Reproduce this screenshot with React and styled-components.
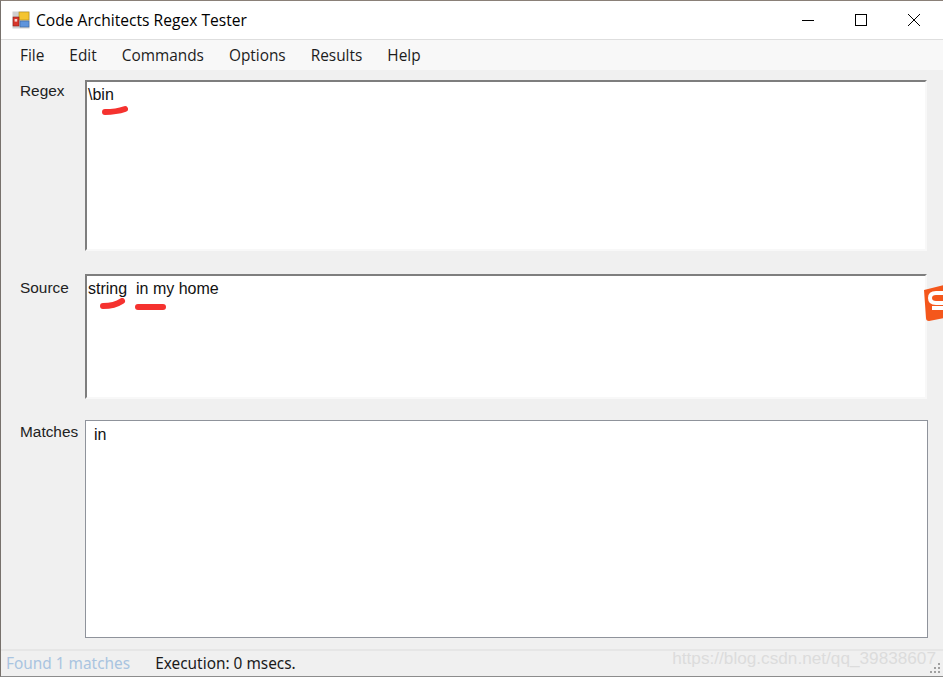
import React from "react";
import styled, { createGlobalStyle } from "styled-components";

const GlobalStyle = createGlobalStyle`
  html, body {
    margin: 0;
    padding: 0;
    background: #f0f0f0;
  }
  * {
    box-sizing: border-box;
  }
`;

const Window = styled.div`
  position: relative;
  width: 943px;
  height: 677px;
  overflow: hidden;
  display: flex;
  flex-direction: column;
  background: #f0f0f0;
  border-top: 1px solid #8a8078;
  border-left: 1px solid #77716c;
  border-bottom: 1px solid #8c8c8c;
  color: #111;
`;

const TitleBar = styled.div`
  height: 39px;
  flex: none;
  display: flex;
  align-items: center;
  background: #fff;
  border-bottom: 1px solid #dedede;
  padding-left: 11px;
`;

const TitleText = styled.span`
  margin-left: 6px;
  font: 15.6px "Open Sans", sans-serif;
  color: #000;
  white-space: nowrap;
`;

const WindowButtons = styled.div`
  margin-left: auto;
  display: flex;
  align-items: center;
  gap: 41px;
  padding-right: 23px;
`;

const MenuBar = styled.div`
  height: 30px;
  flex: none;
  display: flex;
  align-items: center;
  gap: 25px;
  padding-left: 19px;
  background: #f8f8f8;
`;

const MenuItem = styled.span`
  font: 15.4px "Open Sans", sans-serif;
  color: #1d1d1d;
`;

const Form = styled.div`
  flex: 1;
  display: flex;
  flex-direction: column;
  padding: 10px 16px 0 19px;
`;

const Row = styled.div`
  height: ${(p) => p.$height}px;
  margin-bottom: ${(p) => p.$gap}px;
  display: flex;
`;

const Label = styled.label`
  width: 65px;
  flex: none;
  padding-top: ${(p) => p.$top}px;
  font: 15.4px "Liberation Sans", sans-serif;
  color: #222;
`;

const TextBox = styled.div`
  position: relative;
  flex: 1;
  background: #fff;
  padding: 3px 1px;
  font: 16px/20px "Liberation Sans", sans-serif;
  color: #111;
  white-space: pre;
  border-top: 2px solid #7e7e7e;
  border-left: 2px solid #7e7e7e;
  border-right: 2px solid #f8f8f8;
  border-bottom: 2px solid #f8f8f8;
`;

const ResultBox = styled.div`
  flex: 1;
  margin-right: -1px;
  background: #fff;
  border: 1px solid #8f939b;
  padding: 4px 8px;
  font: 16px/20px "Liberation Sans", sans-serif;
  color: #111;
`;

const Mark = styled.svg`
  position: absolute;
  left: ${(p) => p.$left}px;
  top: ${(p) => p.$top}px;
`;

const StatusBar = styled.div`
  height: 27px;
  flex: none;
  display: flex;
  align-items: center;
  gap: 25px;
  padding-left: 5px;
  border-top: 2px solid #e6e6e6;
  font: 15.4px "Noto Sans", sans-serif;
`;

const StatusText = styled.span`
  color: ${(p) => p.$color};
  white-space: nowrap;
`;

const Watermark = styled.span`
  position: absolute;
  right: 7px;
  bottom: 7px;
  font: 17.2px "Liberation Sans", sans-serif;
  color: #dcdcdc;
  white-space: nowrap;
`;

const Grip = styled.svg`
  position: absolute;
  right: 2px;
  bottom: 2px;
`;

const SideBadge = styled.svg`
  position: absolute;
  right: -1px;
  top: 283px;
`;

function AppIcon() {
  return (
    <svg width="18" height="18" viewBox="0 0 18 18">
      <rect x="0.5" y="0.5" width="17" height="17" fill="#cfd0d0" />
      <rect x="7" y="1" width="10" height="8" fill="#f4c430" stroke="#b08a1a" strokeWidth="0.6" />
      <rect x="1" y="6" width="6" height="9" fill="#d8352a" stroke="#8a2018" strokeWidth="0.6" />
      <rect x="2.6" y="8" width="2.6" height="2.6" fill="#f6d5d0" />
      <rect x="8" y="10" width="9" height="6" fill="#5e94dc" stroke="#37629c" strokeWidth="0.6" />
    </svg>
  );
}

function RedMark({ left, top, width, height, d }) {
  return (
    <Mark $left={left} $top={top} width={width} height={height} viewBox={`0 0 ${width} ${height}`}>
      <path d={d} fill="none" stroke="#f5322f" strokeWidth="6" strokeLinecap="round" />
    </Mark>
  );
}

export default function App() {
  return (
    <Window>
      <GlobalStyle />
      <TitleBar>
        <AppIcon />
        <TitleText>Code Architects Regex Tester</TitleText>
        <WindowButtons>
          <svg width="12" height="12" viewBox="0 0 12 12">
            <path d="M0 6.5H12" stroke="#000" strokeWidth="1" />
          </svg>
          <svg width="12" height="12" viewBox="0 0 12 12">
            <rect x="0.5" y="0.5" width="11" height="11" fill="none" stroke="#000" strokeWidth="1" />
          </svg>
          <svg width="12" height="12" viewBox="0 0 12 12">
            <path d="M0 0L12 12M12 0L0 12" stroke="#000" strokeWidth="1" />
          </svg>
        </WindowButtons>
      </TitleBar>
      <MenuBar>
        {["File", "Edit", "Commands", "Options", "Results", "Help"].map((m) => (
          <MenuItem key={m}>{m}</MenuItem>
        ))}
      </MenuBar>
      <Form>
        <Row $height={171} $gap={23}>
          <Label $top={2}>Regex</Label>
          <TextBox>
            \bin
            <RedMark left={15} top={23} width={26} height={10} d="M3 7C9 7 17 6 23 4" />
          </TextBox>
        </Row>
        <Row $height={125} $gap={21}>
          <Label $top={5}>Source</Label>
          <TextBox>
            {"string  in my home"}
            <RedMark left={13} top={22} width={26} height={12} d="M3 8C9 8 16 7 22 3" />
            <RedMark left={48} top={26} width={32} height={10} d="M3 5H28" />
          </TextBox>
        </Row>
        <Row $height={218} $gap={0}>
          <Label $top={3}>Matches</Label>
          <ResultBox>in</ResultBox>
        </Row>
      </Form>
      <StatusBar>
        <StatusText $color="#a9c4e0">Found 1 matches</StatusText>
        <StatusText $color="#1a1a1a">Execution: 0 msecs.</StatusText>
      </StatusBar>
      <Watermark>https://blog.csdn.net/qq_39838607</Watermark>
      <Grip width="12" height="12" viewBox="0 0 12 12" fill="#a0a0a0">
        <rect x="9" y="1" width="2" height="2" />
        <rect x="5" y="5" width="2" height="2" />
        <rect x="9" y="5" width="2" height="2" />
        <rect x="1" y="9" width="2" height="2" />
        <rect x="5" y="9" width="2" height="2" />
        <rect x="9" y="9" width="2" height="2" />
      </Grip>
      <SideBadge width="22" height="38" viewBox="0 0 22 38">
        <path d="M2 6L22 1V34L7 37Q4 37 4 34Z" fill="#f4571c" />
        <path d="M22 9H14Q8 9 8 14Q8 19 14 19H22M22 24H10" fill="none" stroke="#fff" strokeWidth="4" />
      </SideBadge>
    </Window>
  );
}
